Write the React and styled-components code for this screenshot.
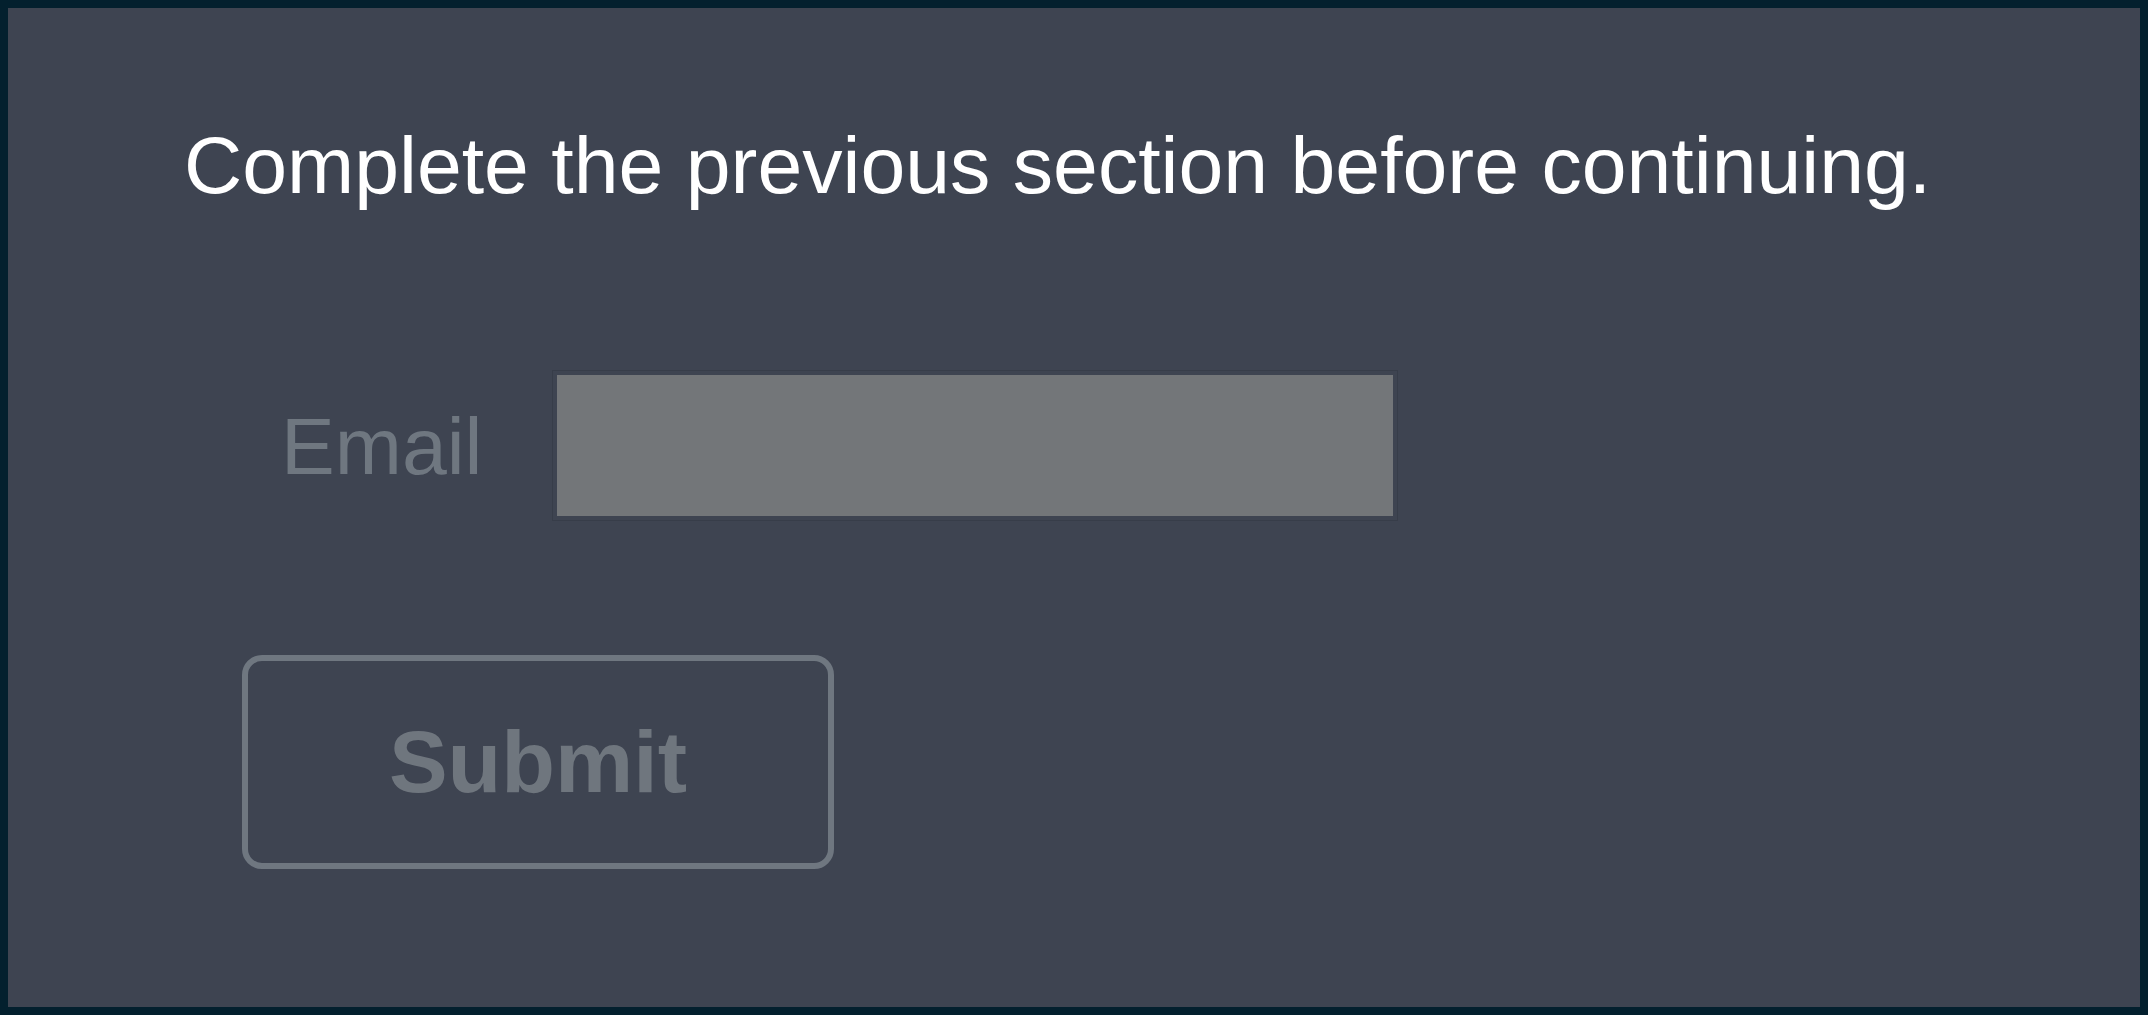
import React from "react";
import styled, { createGlobalStyle } from "styled-components";

const GlobalStyle = createGlobalStyle`
  html, body {
    background: #03202e;
  }
  body {
    margin: 8px;
    font-family: "Liberation Sans", Arial, sans-serif;
  }
  * { box-sizing: border-box; }
`;

const Panel = styled.main`
  height: calc(100vh - 16px);
  background: #3e4451;
  padding: 117px 176px 0 176px;
  display: flex;
  flex-direction: column;
  align-items: flex-start;
  overflow: hidden;
`;

const Heading = styled.h1`
  margin: 0;
  font-family: "Liberation Sans", Arial, sans-serif;
  font-weight: 400;
  font-size: 80.6px;
  line-height: 80px;
  color: #ffffff;
  white-space: nowrap;
`;

const Form = styled.form`
  display: flex;
  flex-direction: column;
  align-items: flex-start;
  margin: 0;
`;

const FieldRow = styled.div`
  display: flex;
  align-items: center;
  gap: 74px;
  margin-top: 170px;
  margin-left: 97px;
`;

const Label = styled.label`
  font-size: 80.6px;
  line-height: 80px;
  color: #6f7780;
  white-space: nowrap;
`;

const Input = styled.input`
  width: 836px;
  height: 141px;
  border: none;
  background: #737679;
  outline: 1px solid rgba(20, 26, 36, 0.15);
  outline-offset: 4px;
  padding: 0 20px;
  font-family: inherit;
  font-size: 60px;
  color: #3e4451;
`;

const SubmitButton = styled.button`
  margin-top: 139px;
  margin-left: 58px;
  width: 592px;
  height: 214px;
  border: 6px solid #6f7780;
  border-radius: 20px;
  background: transparent;
  color: #6f767e;
  font-family: "Liberation Sans", Arial, sans-serif;
  font-weight: 700;
  font-size: 88px;
  line-height: 88px;
  display: flex;
  align-items: center;
  justify-content: center;
  cursor: not-allowed;
`;

export default function App() {
  return (
    <>
      <GlobalStyle />
      <Panel>
        <Heading>Complete the previous section before continuing.</Heading>
        <Form onSubmit={(e) => e.preventDefault()}>
          <FieldRow>
            <Label htmlFor="email">Email</Label>
            <Input id="email" type="email" disabled />
          </FieldRow>
          <SubmitButton type="submit" disabled>
            Submit
          </SubmitButton>
        </Form>
      </Panel>
    </>
  );
}
